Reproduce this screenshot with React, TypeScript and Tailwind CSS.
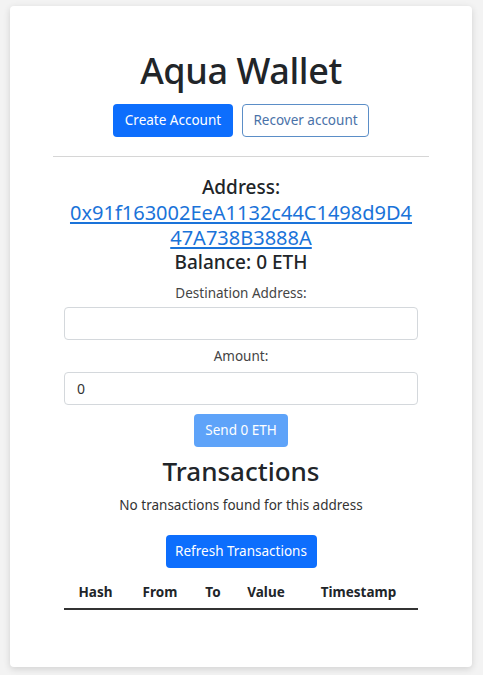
const addressTop = "0x91f163002EeA1132c44C1498d9D4";
const addressBottom = "47A738B3888A";

const columns = [
	{ label: "Hash", width: "w-[63px]" },
	{ label: "From", width: "w-[66px]" },
	{ label: "To", width: "w-[40px]" },
	{ label: "Value", width: "w-[66px]" },
	{ label: "Timestamp", width: "w-[119px]" },
];

const App = () => {
	return (
		<div className="min-h-screen bg-[#f3f3f3] pt-[6px] pl-[10px] font-['Noto_Sans',sans-serif] text-[#212529]">
			<div className="w-[462px] h-[661px] bg-white rounded-[4px] shadow-[0_2px_7px_rgba(0,0,0,0.14)] pt-[42px] flex flex-col items-center">
				<h1 className="text-[36px] leading-[46px] font-medium tracking-[-0.4px]">Aqua Wallet</h1>
				<div className="mt-[10px] flex gap-[9px]">
					<button className="h-[33px] w-[120px] rounded-[4px] bg-[#0d6efd] text-white text-[13.5px]">
						Create Account
					</button>
					<button className="h-[33px] w-[127px] rounded-[4px] border border-[#5b8ec7] text-[#4a72a8] text-[13.5px]">
						Recover account
					</button>
				</div>
				<hr className="mt-[19px] w-[376px] border-t border-[#d6d6d6]" />

				<div className="mt-[18px] flex flex-col items-center leading-[25px]">
					<span className="text-[19px] font-medium">Address:</span>
					<a href="#" className="text-[20px] text-[#1a73d9] underline underline-offset-2 text-center">
						{addressTop}
						<br />
						{addressBottom}
					</a>
					<span className="text-[19px] font-medium">Balance: 0 ETH</span>
				</div>

				<label className="mt-[8px] text-[13.5px] leading-[20px] text-[#444]">Destination Address:</label>
				<input className="mt-[4px] w-[354px] h-[33px] rounded-[4px] border border-[#d4d8dc] px-3 text-[14px] outline-none" />

				<label className="mt-[6px] text-[13.5px] leading-[20px] text-[#444]">Amount:</label>
				<input
					className="mt-[6px] w-[354px] h-[33px] rounded-[4px] border border-[#d4d8dc] px-3 text-[14px] text-[#333] outline-none"
					defaultValue="0"
				/>

				<button className="mt-[9px] h-[33px] w-[94px] rounded-[4px] bg-[#5ea3f9] text-white text-[13.5px]">
					Send 0 ETH
				</button>

				<h2 className="mt-[6px] text-[26px] leading-[36px] font-medium">Transactions</h2>
				<p className="mt-[6px] text-[13.5px] leading-[20px] text-[#333]">No transactions found for this address</p>

				<button className="mt-[20px] h-[33px] w-[151px] rounded-[4px] bg-[#0d6efd] text-white text-[13.5px]">
					Refresh Transactions
				</button>

				<div className="mt-[8px] w-[354px] flex h-[34px] items-center border-b-2 border-[#333]">
					{columns.map((c) => (
						<div key={c.label} className={`${c.width} text-center text-[13.5px] font-bold`}>
							{c.label}
						</div>
					))}
				</div>
			</div>
		</div>
	);
};

export default App;
